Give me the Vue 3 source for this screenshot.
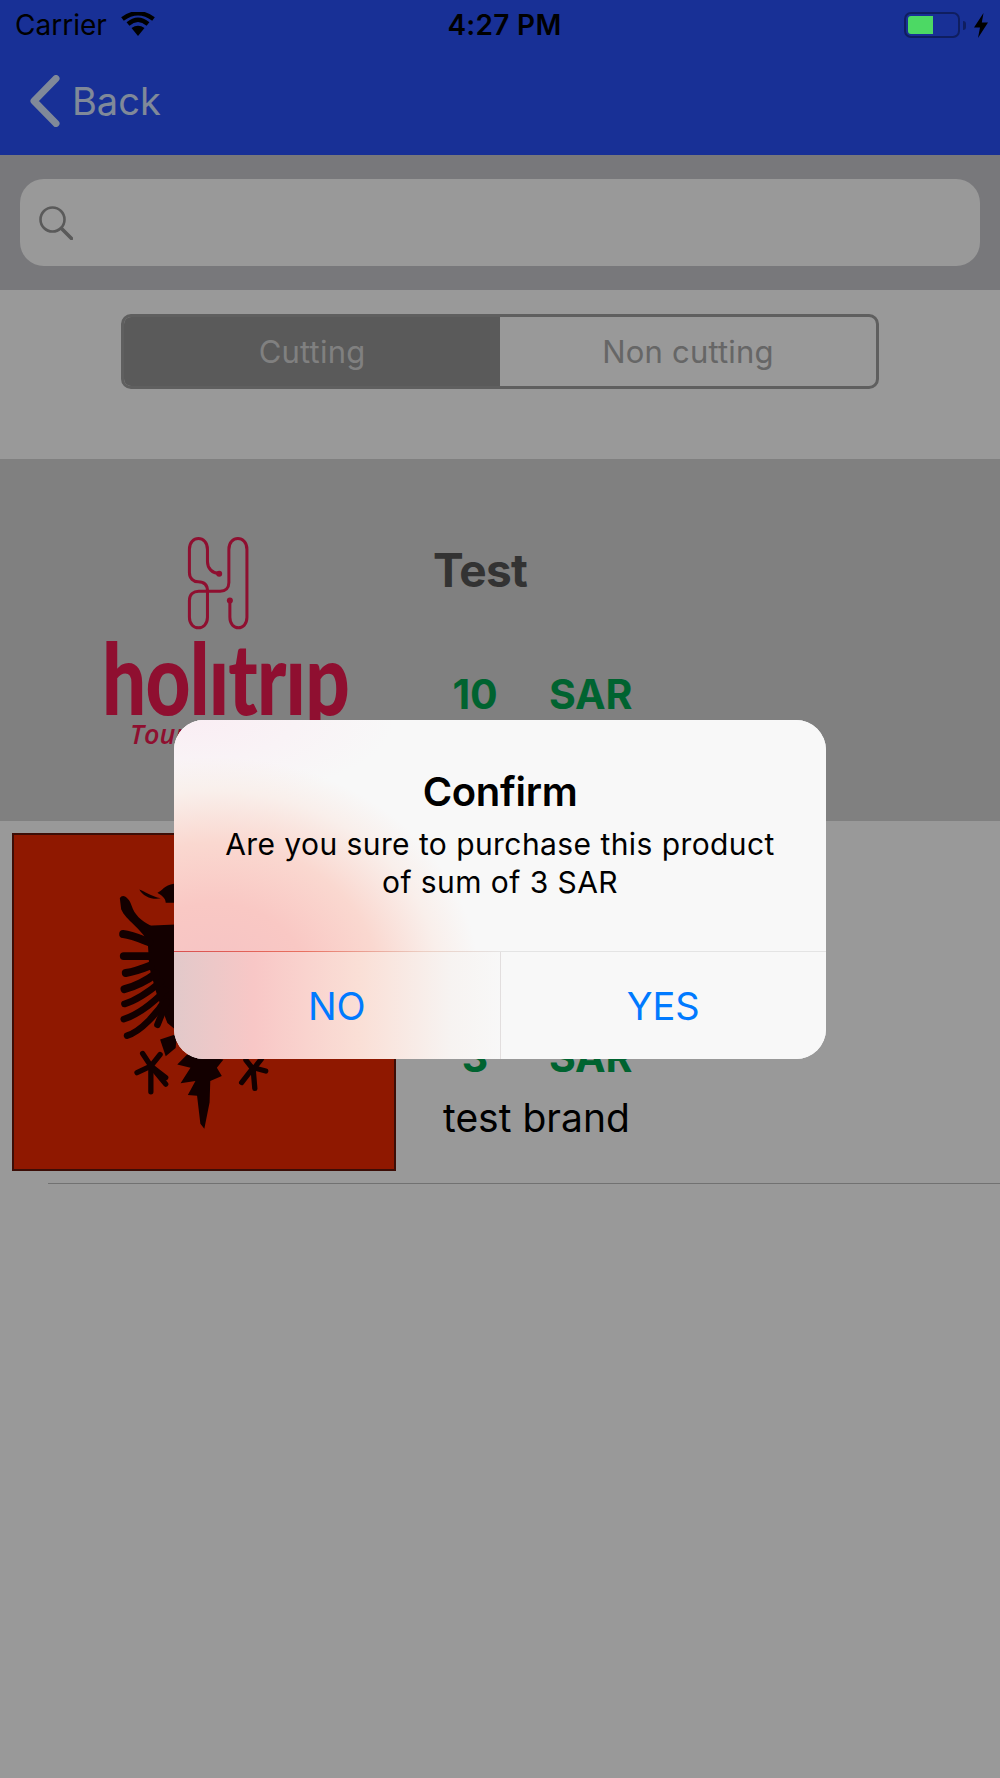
<template>
  <div class="screen">
    <header class="topbar">
      <div class="status">
        <div class="status-left">
          <span class="carrier">Carrier</span>
          <svg class="wifi" width="34" height="24" viewBox="0 0 34 24">
            <path d="M17 24 L10.5 16 Q17 11.5 23.5 16 Z" fill="#000" />
            <path d="M7 12 Q17 3.5 27 12" fill="none" stroke="#000" stroke-width="4.4" />
            <path d="M1.5 7 Q17 -4.5 32.5 7" fill="none" stroke="#000" stroke-width="4.4" />
          </svg>
        </div>
        <span class="clock">4:27 PM</span>
        <div class="status-right">
          <div class="battery"><div class="battery-fill"></div></div>
          <div class="battery-nub"></div>
          <svg class="bolt" width="14" height="25" viewBox="0 0 14 25">
            <path d="M9.5 0 L0 14.5 L6 14.5 L4 25 L14 9.5 L7.8 9.5 Z" fill="#000" />
          </svg>
        </div>
      </div>
      <div class="nav">
        <svg class="chevron" width="30" height="52" viewBox="0 0 30 52">
          <path d="M26 3.5 L4 26 L26 48.5" fill="none" stroke="#d5e4ff" stroke-width="7" stroke-linecap="round" stroke-linejoin="round" />
        </svg>
        <span class="back">Back</span>
      </div>
    </header>

    <div class="search-wrap">
      <div class="search-field">
        <svg width="34" height="34" viewBox="0 0 34 34">
          <circle cx="13.5" cy="13.5" r="12" fill="none" stroke="#969696" stroke-width="2.6" />
          <path d="M22.5 22.5 L32.5 32.5" stroke="#969696" stroke-width="3.6" stroke-linecap="round" />
        </svg>
      </div>
    </div>

    <div class="tabs-wrap">
      <div class="segment">
        <div class="seg seg-active">Cutting</div>
        <div class="seg">Non cutting</div>
      </div>
    </div>

    <section class="offer">
      <div class="logo">
        <svg class="logo-mark" width="67" height="97" viewBox="310 100 200 290">
          <g fill="none" stroke="#ee1950" stroke-width="9" stroke-linecap="round" stroke-linejoin="round">
            <path d="M415 215 C395 215 380 200 380 180 L380 143 C380 100 326 100 326 143 L326 212 C326 230 338 240 352 240 C370 240 380 250 380 268 L380 346 C380 388 326 388 326 346 L326 296 C326 278 338 268 354 268 L418 268 C434 268 444 258 444 242 L444 143 C444 100 498 100 498 143 L498 346 C498 388 447 388 447 346 L447 296" />
          </g>
          <circle cx="415" cy="216" r="9" fill="#ee1950" />
          <circle cx="447" cy="296" r="9" fill="#ee1950" />
        </svg>
        <div class="wordmark">holıtrıp</div>
        <div class="tagline">Tours</div>
      </div>
      <div class="info">
        <div class="title">Test</div>
        <div class="price price-first">
          <span class="amount">10</span>
          <span class="currency">SAR</span>
        </div>
      </div>
    </section>

    <section class="product">
      <div class="flag">
        <svg width="380" height="334" viewBox="36 70 1150 1012">
          <g fill="#200000">
            <path d="M356 262 C365 245 385 262 392 285 C400 310 420 330 450 345 L470 420 L445 400 C420 350 375 330 360 295 Z" />
            <path d="M470 245 C485 240 490 222 520 218 L540 275 L495 275 C495 260 480 252 470 245 Z" />
            <path d="M415 235 C430 240 450 255 480 262 C455 268 425 255 415 235 Z" />
            <path d="M438 345 L560 340 L560 690 L500 640 L470 560 L445 470 Z" />
            <path d="M478 690 L530 672 L525 715 L495 740 Z" />
            <path d="M530 765 L560 735 L670 750 L650 775 L665 800 L630 815 L628 880 L612 960 L600 945 L590 860 L562 858 L585 815 L540 822 L570 775 Z" />
          </g>
          <g fill="none" stroke="#200000" stroke-width="24" stroke-linecap="round">
            <path d="M366 370 C390 372 420 385 445 395" />
            <path d="M368 437 L445 437" />
            <path d="M374 488 C395 485 425 475 450 465" />
            <path d="M370 537 C400 530 440 510 465 490" />
          </g>
          <g fill="none" stroke="#200000" stroke-width="20" stroke-linecap="round">
            <path d="M370 582 C410 570 450 540 480 515" />
            <path d="M368 628 C410 615 460 575 495 540" />
            <path d="M378 678 C420 665 470 610 500 560" />
            <path d="M470 645 L498 575" />
          </g>
          <g fill="none" stroke="#200000" stroke-width="16" stroke-linecap="round">
            <path d="M408 790 L450 770 L495 805" />
            <path d="M425 732 L450 770 L450 848" />
            <path d="M450 770 L495 825" />
            <path d="M450 770 L478 735" />
            <path d="M798 785 L760 775 L725 820" />
            <path d="M738 752 L760 780 L765 838" />
            <path d="M760 780 L785 748" />
          </g>
        </svg>
      </div>
      <div class="info product-info">
        <div class="price">
          <span class="amount">3</span>
          <span class="currency">SAR</span>
        </div>
        <div class="brand">test brand</div>
      </div>
    </section>
    <div class="separator"></div>

    <div class="dim"></div>

    <div class="alert">
      <div class="alert-body">
        <div class="alert-title">Confirm</div>
        <div class="alert-text">Are you sure to purchase this product of sum of 3 SAR</div>
      </div>
      <div class="alert-actions">
        <div class="alert-btn btn-no">NO</div>
        <div class="alert-btn">YES</div>
      </div>
    </div>
  </div>
</template>

<script setup>
</script>

<style>
html,
body {
  margin: 0;
  background: #fff;
}
</style>

<style scoped>
.screen {
  position: relative;
  width: 1000px;
  height: 1778px;
  overflow: hidden;
  background: #fff;
  font-family: Inter, "Liberation Sans", sans-serif;
  color: #000;
}

.topbar {
  height: 155px;
  background: #2850fa;
}

.status {
  position: relative;
  z-index: 2;
  display: flex;
  align-items: center;
  justify-content: space-between;
  height: 50px;
  padding: 0 12px 0 15px;
}

.status-left,
.status-right {
  display: flex;
  align-items: center;
  width: 200px;
}

.status-right {
  justify-content: flex-end;
}

.carrier {
  font-size: 28px;
}

.wifi {
  margin: -2px 0 0 14px;
}

.clock {
  margin-left: 6px;
  font-size: 28px;
  font-weight: 600;
  letter-spacing: 0.3px;
}

.battery {
  box-sizing: border-box;
  width: 56px;
  height: 26px;
  padding: 2px;
  border: 2px solid #0f1e60;
  border-radius: 7px;
}

.battery-fill {
  width: 25px;
  height: 18px;
  border-radius: 3px 0 0 3px;
  background: #4cd964;
}

.battery-nub {
  width: 3px;
  height: 9px;
  margin-left: 3px;
  border-radius: 0 3px 3px 0;
  background: #0f1e60;
}

.bolt {
  margin-left: 8px;
}

.nav {
  display: flex;
  align-items: center;
  height: 102px;
  padding-left: 30px;
}

.back {
  margin-left: 12px;
  font-size: 38px;
  color: #d5e4ff;
}

.search-wrap {
  box-sizing: border-box;
  height: 135px;
  padding: 24px 20px;
  background: #c9c9ce;
}

.search-field {
  display: flex;
  align-items: center;
  height: 87px;
  padding-left: 19px;
  border-radius: 24px;
  background: #fff;
}

.tabs-wrap {
  box-sizing: border-box;
  height: 169px;
  padding: 24px 121px 0;
}

.segment {
  display: flex;
  box-sizing: border-box;
  height: 75px;
  border: 3px solid #9e9e9e;
  border-radius: 10px;
  overflow: hidden;
}

.seg {
  flex: 1;
  display: flex;
  align-items: center;
  justify-content: center;
  font-size: 31px;
  letter-spacing: 0.2px;
  color: #aaa;
}

.seg-active {
  background: #969696;
  color: #d5d5d5;
}

.offer {
  display: flex;
  height: 362px;
  background: #d5d5d5;
}

.logo {
  box-sizing: border-box;
  width: 433px;
  padding: 76px 0 0 102px;
  color: #ee1950;
}

.logo-mark {
  display: block;
  margin-left: 82px;
}

.wordmark {
  width: 307px;
  margin-top: 2px;
  font-family: Lato, sans-serif;
  font-size: 100px;
  font-weight: 900;
  line-height: 84px;
  letter-spacing: -1px;
  transform: scaleX(0.78);
  transform-origin: left center;
}

.tagline {
  margin: 2px 0 0 28px;
  font-family: "Open Sans", sans-serif;
  font-size: 27px;
  font-style: italic;
  font-weight: 600;
  line-height: 28px;
}

.info {
  padding-top: 88px;
}

.title {
  height: 46px;
  font-size: 46px;
  font-weight: 700;
  line-height: 46px;
  letter-spacing: -0.8px;
  color: #555;
}

.price {
  display: flex;
  gap: 32px;
  font-size: 41px;
  font-weight: 700;
  line-height: 41px;
  letter-spacing: -0.2px;
  color: #00a550;
}

.price-first {
  margin-top: 81px;
}

.amount {
  width: 84px;
  text-align: center;
}

.product {
  display: flex;
  height: 362px;
  box-sizing: border-box;
  padding: 12px 0 0 12px;
}

.flag {
  box-sizing: border-box;
  width: 384px;
  height: 338px;
  border: 2px solid #64170a;
  background: #ee2800;
}

.flag svg {
  display: block;
}

.product-info {
  padding: 204px 0 0 37px;
}

.brand {
  margin: 20px 0 0 10px;
  font-size: 39px;
  line-height: 39px;
}

.separator {
  height: 1px;
  margin-left: 48px;
  background: #bdbdbd;
}

.dim {
  position: absolute;
  inset: 0;
  z-index: 1;
  background: rgba(0, 0, 0, 0.4);
}

.alert {
  position: absolute;
  top: 720px;
  left: 174px;
  z-index: 3;
  display: flex;
  flex-direction: column;
  width: 652px;
  height: 339px;
  border-radius: 30px;
  overflow: hidden;
  background: #f8f8f8;
}

.alert-body {
  flex: 1;
  box-sizing: border-box;
  padding: 53px 40px 0;
  text-align: center;
  background:
    radial-gradient(ellipse 265px 225px at 40px 262px, #f5c3c4 0%, #f9c8c4 35%, #fad8d0 62%, #f9efeb 85%, rgba(248, 248, 248, 0) 100%),
    radial-gradient(ellipse 200px 80px at 20px 0, #faeef4 0%, rgba(248, 248, 248, 0) 100%),
    #f8f8f8;
}

.alert-title {
  font-size: 40px;
  font-weight: 600;
  line-height: 38px;
  letter-spacing: -0.3px;
}

.alert-text {
  margin-top: 14px;
  font-size: 30px;
  line-height: 38px;
  letter-spacing: 0.43px;
}

.alert-actions {
  display: flex;
  height: 107px;
  border-top: 1px solid;
  border-image: linear-gradient(90deg, #d95050 0, #e87060 130px, #eccfc4 250px, #e4e4e4 330px) 1;
  background: linear-gradient(90deg, #e2c9ca 0, #f8c7c6 80px, #fadfd6 185px, #f7f3f1 275px, #f8f8f8 330px);
}

.alert-btn {
  flex: 1;
  display: flex;
  align-items: center;
  justify-content: center;
  font-size: 38px;
  color: #007aff;
}

.btn-no {
  border-right: 1px solid #e2dede;
}
</style>
